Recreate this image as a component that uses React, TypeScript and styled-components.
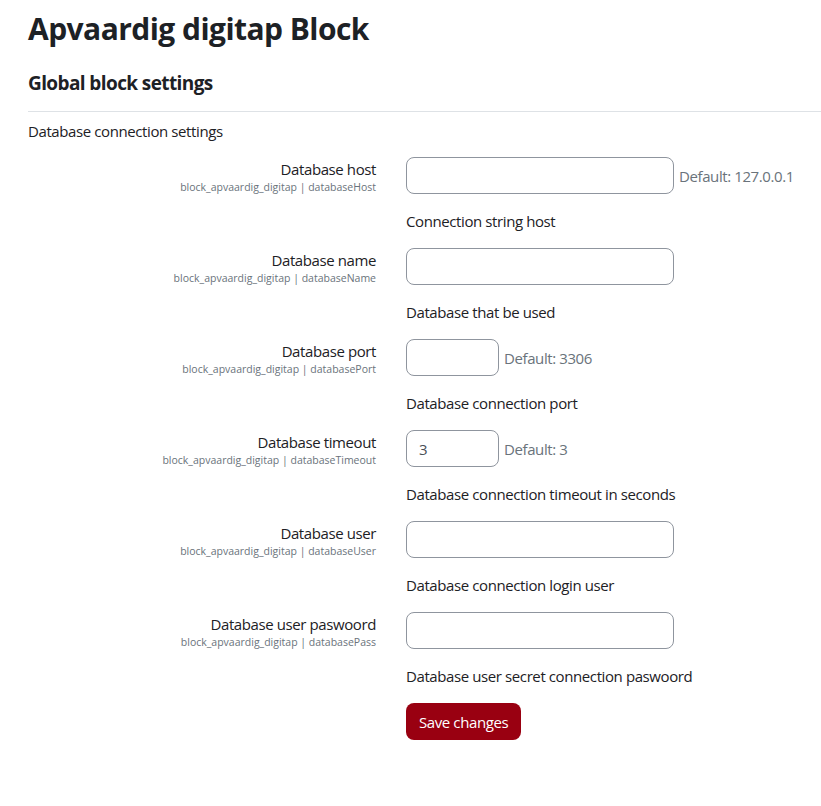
import React from "react";
import styled, { createGlobalStyle } from "styled-components";

const Global = createGlobalStyle`
  html, body { margin: 0; padding: 0; background: #fff; }
  body {
    font-family: "Open Sans", "Noto Sans", sans-serif;
    color: #1d2125;
    font-size: 15px;
    line-height: 1.5;
    letter-spacing: -0.4px;
  }
  * { box-sizing: border-box; }
`;

const Page = styled.div`
  padding: 11px 0 40px 28px;
  overflow: hidden;
`;

const Title = styled.h2`
  margin: 0;
  font-size: 30px;
  font-weight: 700;
  line-height: 1.2;
  letter-spacing: -0.55px;
`;

const SectionTitle = styled.h3`
  margin: 25px 0 0;
  font-size: 19px;
  font-weight: 700;
  line-height: 1.2;
  letter-spacing: -0.6px;
`;

const Rule = styled.hr`
  margin: 16px -40px 8px 0;
  border: 0;
  border-top: 1px solid #dee2e6;
`;

const Intro = styled.p`
  margin: 0 0 15px;
`;

const Form = styled.div`
  display: grid;
  grid-template-columns: 348px 1fr;
  column-gap: 30px;
`;

const LabelCol = styled.div`
  text-align: right;
  padding-top: 1px;
`;

const LabelText = styled.div`
  font-size: 15px;
  line-height: 22px;
`;

const ShortName = styled.div`
  font-size: 10.5px;
  line-height: 15px;
  color: #6a737b;
  letter-spacing: 0;
`;

const SettingCol = styled.div`
  display: flex;
  flex-direction: column;
  align-items: flex-start;
`;

const InputLine = styled.div`
  display: flex;
  align-items: center;
  gap: 5px;
`;

const Input = styled.input<{ $w: number }>`
  width: ${(p) => p.$w}px;
  height: 37px;
  border: 1px solid #8f959e;
  border-radius: 8px;
  padding: 6px 12px;
  font: inherit;
  letter-spacing: inherit;
  color: #495057;
  background: #fff;
  outline: none;
`;

const DefaultText = styled.span`
  color: #6a737b;
`;

const Description = styled.div`
  margin: 16px 0 16px;
  line-height: 22px;
`;

const SaveButton = styled.button`
  height: 37px;
  padding: 0 13px;
  border: 0;
  border-radius: 8px;
  background: #990011;
  color: #fff;
  font: inherit;
  letter-spacing: inherit;
  cursor: pointer;
`;

type Setting = {
  label: string;
  key: string;
  width: number;
  value?: string;
  def?: string;
  desc: string;
};

const settings: Setting[] = [
  { label: "Database host", key: "databaseHost", width: 268, def: "127.0.0.1", desc: "Connection string host" },
  { label: "Database name", key: "databaseName", width: 268, desc: "Database that be used" },
  { label: "Database port", key: "databasePort", width: 93, def: "3306", desc: "Database connection port" },
  { label: "Database timeout", key: "databaseTimeout", width: 93, value: "3", def: "3", desc: "Database connection timeout in seconds" },
  { label: "Database user", key: "databaseUser", width: 268, desc: "Database connection login user" },
  { label: "Database user paswoord", key: "databasePass", width: 268, desc: "Database user secret connection paswoord" },
];

export default function App() {
  return (
    <>
      <Global />
      <Page>
        <Title>Apvaardig digitap Block</Title>
        <SectionTitle>Global block settings</SectionTitle>
        <Rule />
        <Intro>Database connection settings</Intro>
        <Form>
          {settings.map((s) => (
            <React.Fragment key={s.key}>
              <LabelCol>
                <LabelText>{s.label}</LabelText>
                <ShortName>block_apvaardig_digitap | {s.key}</ShortName>
              </LabelCol>
              <SettingCol>
                <InputLine>
                  <Input $w={s.width} defaultValue={s.value ?? ""} />
                  {s.def && <DefaultText>Default: {s.def}</DefaultText>}
                </InputLine>
                <Description>{s.desc}</Description>
              </SettingCol>
            </React.Fragment>
          ))}
          <div />
          <SettingCol>
            <SaveButton>Save changes</SaveButton>
          </SettingCol>
        </Form>
      </Page>
    </>
  );
}
